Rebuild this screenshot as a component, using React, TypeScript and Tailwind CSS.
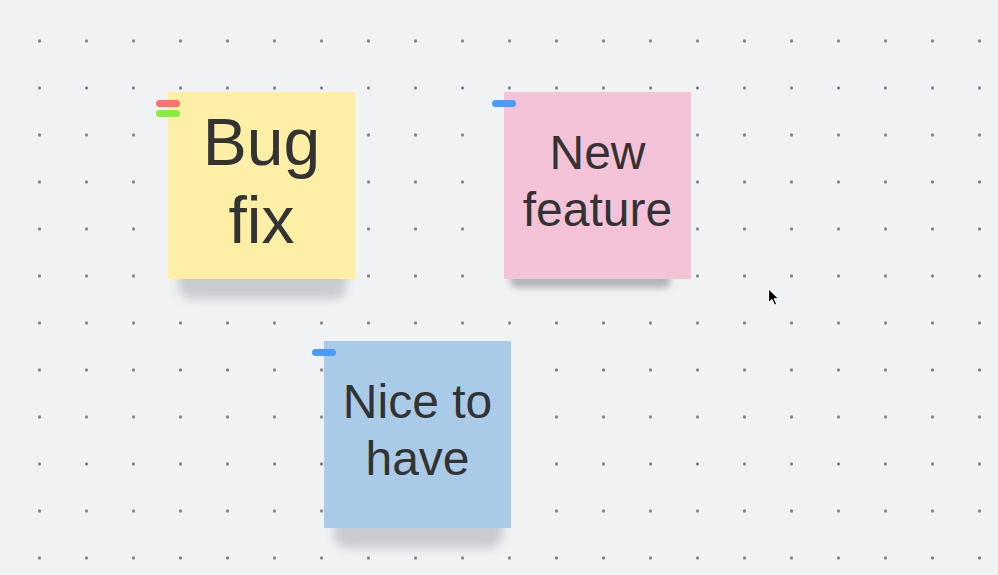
import React from "react";

function Sticky({
  x,
  y,
  bg,
  children,
  tags,
  shadow,
}: {
  x: number;
  y: number;
  bg: string;
  children: React.ReactNode;
  tags: React.ReactNode;
  shadow: React.ReactNode;
}) {
  return (
    <div className="absolute w-[187px] h-[187px]" style={{ left: x, top: y }}>
      {shadow}
      <div
        className={`relative w-full h-full flex items-center justify-center text-center pb-[10px] text-[#333333] ${bg}`}
        style={{ fontFamily: '"Liberation Sans", Arial, sans-serif' }}
      >
        {children}
      </div>
      <div className="absolute left-[-12px] top-[8px] flex flex-col gap-[3px]">{tags}</div>
    </div>
  );
}

export default function App() {
  return (
    <div className="relative w-[998px] h-[575px] overflow-hidden bg-[#f1f2f4] bg-[radial-gradient(circle,#767d88_1.3px,transparent_1.6px)] bg-[length:47px_47px] bg-[position:16px_17.5px]">
      <Sticky
        x={168}
        y={92}
        bg="bg-[#fdf0a6]"
        tags={
          <>
            <div className="w-[24px] h-[7px] rounded-full bg-[#ff7272]" />
            <div className="w-[24px] h-[7px] rounded-full bg-[#86ee41]" />
          </>
        }
        shadow={
          <div className="absolute left-[10px] right-[8px] bottom-[-20px] h-[34px] rounded-[14px] bg-[#b9bbbf]/70 blur-[5px]" />
        }
      >
        <div className="text-[66px] leading-[78px]">
          Bug
          <br />
          fix
        </div>
      </Sticky>

      <Sticky
        x={504}
        y={92}
        bg="bg-[#f5c3d8]"
        tags={<div className="w-[24px] h-[7px] rounded-full bg-[#4b9cff]" />}
        shadow={
          <div className="absolute left-[6px] right-[20px] bottom-[-9px] h-[18px] rounded-[8px] bg-[#9a9da1]/70 blur-[3px]" />
        }
      >
        <div className="text-[48px] leading-[57px]">
          New
          <br />
          feature
        </div>
      </Sticky>

      <Sticky
        x={324}
        y={341}
        bg="bg-[#a9cbe8]"
        tags={<div className="w-[24px] h-[7px] rounded-full bg-[#4b9cff]" />}
        shadow={
          <div className="absolute left-[10px] right-[8px] bottom-[-20px] h-[34px] rounded-[14px] bg-[#b9bbbf]/70 blur-[5px]" />
        }
      >
        <div className="text-[48px] leading-[57px]">
          Nice to
          <br />
          have
        </div>
      </Sticky>

      <svg className="absolute left-[767px] top-[287px]" width="14" height="20" viewBox="0 0 14 20">
        <path
          d="M1.5 1.5 L1.5 16 L5 12.8 L7.4 18.3 L9.8 17.2 L7.4 11.8 L12 11.8 Z"
          fill="#000"
          stroke="#fff"
          strokeWidth="1.2"
          strokeLinejoin="round"
        />
      </svg>
    </div>
  );
}
